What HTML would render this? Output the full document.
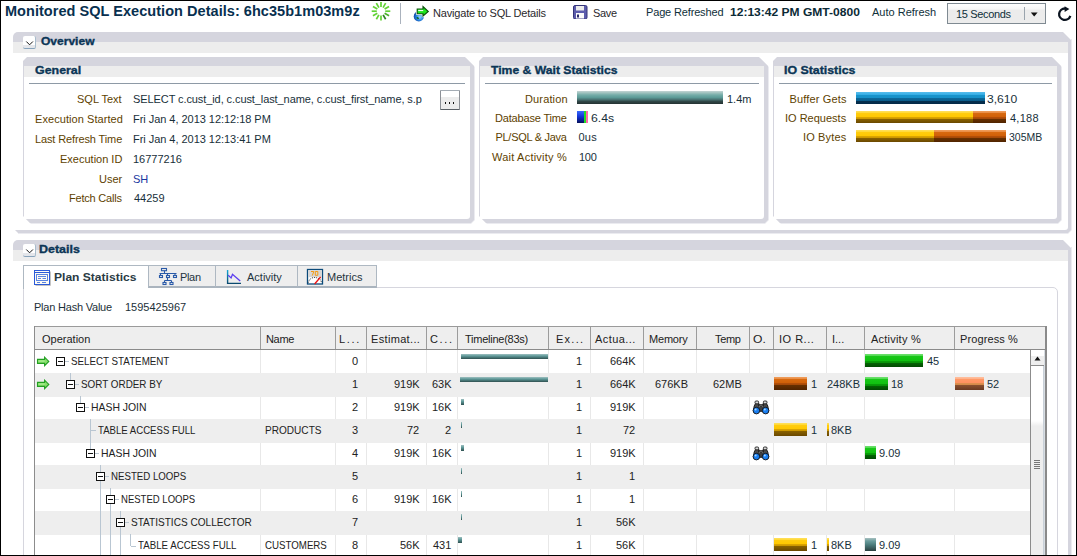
<!DOCTYPE html><html><head><meta charset="utf-8"><style>
html,body{margin:0;padding:0;}
body{width:1077px;height:556px;position:relative;overflow:hidden;background:#fff;font-family:"Liberation Sans", sans-serif;}
.t{position:absolute;white-space:pre;}
.r{position:absolute;}
svg{position:absolute;}
</style></head><body><svg style="left:0;top:0" width="400" height="30"><line x1="381.00" y1="7.00" x2="381.00" y2="1.90" stroke="#62d234" stroke-width="1.7"/><line x1="383.10" y1="7.56" x2="385.65" y2="3.15" stroke="#62d234" stroke-width="1.7"/><line x1="384.64" y1="9.10" x2="389.05" y2="6.55" stroke="#62d234" stroke-width="1.7"/><line x1="385.20" y1="11.20" x2="390.30" y2="11.20" stroke="#62d234" stroke-width="1.7"/><line x1="384.64" y1="13.30" x2="389.05" y2="15.85" stroke="#49b028" stroke-width="1.7"/><line x1="383.10" y1="14.84" x2="385.65" y2="19.25" stroke="#2e8420" stroke-width="1.7"/><line x1="381.00" y1="15.40" x2="381.00" y2="20.50" stroke="#62d234" stroke-width="1.7"/><line x1="378.90" y1="14.84" x2="376.35" y2="19.25" stroke="#62d234" stroke-width="1.7"/><line x1="377.36" y1="13.30" x2="372.95" y2="15.85" stroke="#62d234" stroke-width="1.7"/><line x1="376.80" y1="11.20" x2="371.70" y2="11.20" stroke="#62d234" stroke-width="1.7"/><line x1="377.36" y1="9.10" x2="372.95" y2="6.55" stroke="#62d234" stroke-width="1.7"/><line x1="378.90" y1="7.56" x2="376.35" y2="3.15" stroke="#62d234" stroke-width="1.7"/></svg>
<div class="r" style="left:400px;top:3px;width:1px;height:21px;background:#aab2bd;"></div>
<svg style="left:410px;top:4px" width="22" height="20" viewBox="0 0 22 20">
<defs><radialGradient id="gl" cx="0.6" cy="0.55" r="0.65"><stop offset="0" stop-color="#9ad8ff"/><stop offset="0.5" stop-color="#2a86e0"/><stop offset="1" stop-color="#0a3a9a"/></radialGradient></defs>
<circle cx="8.8" cy="12.4" r="5.1" fill="url(#gl)"/>
<path d="M6.5 13.2 Q8 12.5 9 14.5 Q8 15.5 6.8 14.6Z" fill="#0a6a20"/>
<path d="M7.2 5 H13 V2.6 L18.3 7.5 L13 12 V9.8 H7.2 Z" fill="#fff" stroke="#fff" stroke-width="2.6" stroke-linejoin="round"/>
<path d="M7.2 5 H13 V2.6 L18.3 7.5 L13 12 V9.8 H7.2 Z" fill="#1ee61e" stroke="#0b500b" stroke-width="1.1"/>
<rect x="8.2" y="5.9" width="5" height="1.2" fill="#f0fff0"/>
</svg>
<svg style="left:573px;top:5px" width="15" height="14" viewBox="0 0 15 14">
<rect x="0.5" y="0.5" width="13.5" height="13.5" rx="1.5" fill="#5c5cac" stroke="#343478" stroke-width="1"/>
<rect x="3" y="1" width="8" height="4.5" fill="#ececec"/><rect x="3" y="8" width="8" height="5.5" fill="#fafafa"/><rect x="4" y="9.5" width="2" height="3" fill="#2a2a6a"/>
</svg>
<div class="r" style="left:947px;top:3px;width:97px;height:19px;border:1px solid #7f8a92;background:linear-gradient(#fdfdfd 0,#f6f6f6 5px,#ececec 6px,#ececec 100%);"></div>
<div class="r" style="left:1024px;top:7px;width:1px;height:13px;background:#9aa4ad;"></div>
<svg style="left:1030px;top:12px" width="9" height="6"><path d="M0.8 0.5 L7.6 0.5 L4.2 4.6Z" fill="#111"/></svg>
<svg style="left:1057px;top:6px" width="16" height="16" viewBox="0 0 16 16">
<path d="M13.3 9.8 A5.7 5.7 0 1 1 8.2 2.5" stroke="#0b1420" stroke-width="2.3" fill="none"/>
<path d="M7.6 0.2 L12.4 3 L7.6 5.9 Z" fill="#0b1420"/>
</svg>
<div class="r" style="left:13px;top:32px;width:1058px;height:21px;background:#d5d5de;border-top-left-radius:5px;clip-path:polygon(0 0,1050px 0,1058px 8px,1058px 100%,0 100%);"></div>
<div class="r" style="left:13px;top:42px;width:1055px;height:11px;background:#ededed;"></div>
<div class="r" style="left:1071px;top:39px;width:1px;height:14px;background:#ebebf0;"></div>
<div class="r" style="left:23px;top:36px;width:12px;height:12px;background:linear-gradient(#ffffff 0,#ffffff 9px,#e4e6ea 9px);border-radius:2px;border-right:1px solid #a8bccc;border-bottom:1px solid #88a4bc;"></div>
<svg style="left:25px;top:40px" width="10" height="7"><path d="M1.3 1.5 L4.6 4.8 L7.9 1.5" stroke="#111" stroke-width="1" fill="none"/></svg>
<div class="r" style="left:18px;top:53px;width:1054px;height:181px;background:#ebebf0;clip-path:polygon(0 0,100% 0,100% calc(100% - 4px),calc(100% - 4px) 100%,0 100%);"></div>
<div class="r" style="left:15px;top:53px;width:1056px;height:180px;background:#d5d5de;clip-path:polygon(0 0,100% 0,100% calc(100% - 3px),calc(100% - 3px) 100%,3px 100%,0 calc(100% - 3px));"></div>
<div class="r" style="left:13px;top:53px;width:1055px;height:177px;background:#fff;border-bottom-right-radius:3px;"></div>
<div class="r" style="left:24px;top:58px;width:451px;height:166px;background:#ebebf0;clip-path:polygon(4px 0,442px 0,451px 9px,451px 162px,447px 166px,7px 166px,0 159px,0 4px);"></div>
<div class="r" style="left:23px;top:57px;width:451px;height:166px;background:#d5d5de;clip-path:polygon(4px 0,442px 0,451px 9px,451px 163px,448px 166px,7px 166px,0 159px,0 4px);"></div>
<div class="r" style="left:24px;top:66px;width:446px;height:11px;background:#ededed;"></div>
<div class="r" style="left:24px;top:77px;width:446px;height:142px;background:#fff;border-bottom-right-radius:3px;"></div>
<div class="r" style="left:29px;top:83px;width:436px;height:1px;background:#8e9aa6;"></div>
<div class="r" style="left:480px;top:58px;width:289px;height:166px;background:#ebebf0;clip-path:polygon(4px 0,280px 0,289px 9px,289px 162px,285px 166px,7px 166px,0 159px,0 4px);"></div>
<div class="r" style="left:479px;top:57px;width:289px;height:166px;background:#d5d5de;clip-path:polygon(4px 0,280px 0,289px 9px,289px 163px,286px 166px,7px 166px,0 159px,0 4px);"></div>
<div class="r" style="left:480px;top:66px;width:284px;height:11px;background:#ededed;"></div>
<div class="r" style="left:480px;top:77px;width:284px;height:142px;background:#fff;border-bottom-right-radius:3px;"></div>
<div class="r" style="left:485px;top:83px;width:274px;height:1px;background:#8e9aa6;"></div>
<div class="r" style="left:774px;top:58px;width:288px;height:166px;background:#ebebf0;clip-path:polygon(4px 0,279px 0,288px 9px,288px 162px,284px 166px,7px 166px,0 159px,0 4px);"></div>
<div class="r" style="left:773px;top:57px;width:288px;height:166px;background:#d5d5de;clip-path:polygon(4px 0,279px 0,288px 9px,288px 163px,285px 166px,7px 166px,0 159px,0 4px);"></div>
<div class="r" style="left:774px;top:66px;width:283px;height:11px;background:#ededed;"></div>
<div class="r" style="left:774px;top:77px;width:283px;height:142px;background:#fff;border-bottom-right-radius:3px;"></div>
<div class="r" style="left:779px;top:83px;width:273px;height:1px;background:#8e9aa6;"></div>
<div class="r" style="left:440px;top:90px;width:18px;height:18px;border:1px solid #8c9096;border-top-color:#a4acb4;border-bottom-color:#5a6066;border-radius:1px;background:linear-gradient(#ffffff 0,#ffffff 6px,#ececec 6px,#ececec 100%);"></div>
<div class="r" style="left:445px;top:102px;width:1.4px;height:2px;background:#111;"></div>
<div class="r" style="left:449px;top:102px;width:1.4px;height:2px;background:#111;"></div>
<div class="r" style="left:453px;top:102px;width:1.4px;height:2px;background:#111;"></div>
<div class="r" style="left:577px;top:91px;width:146px;height:13px;background:linear-gradient(#c4d4d4 0,#9cc0bc 2px,#74aca8 4px,#5c9a96 6.5px,#4a7474 8.5px,#304646 10.5px,#243232 13px);"></div>
<div class="r" style="left:577px;top:111px;width:11px;height:12px;background:linear-gradient(90deg,transparent 0,transparent 7px,#22dd22 7px,#22dd22 9px,#ff66aa 9px,#ff66aa 11px),linear-gradient(#3a6aff,#1030d0 6px,#06105a);"></div>
<div class="r" style="left:856px;top:92px;width:129px;height:12px;background:linear-gradient(#58bcec 0,#30ace4 3px,#1894cc 3px,#1690c8 6px,#0c6a9c 6px,#0a5a88 9px,#05304f 9px,#042a48 12px);"></div>
<div class="r" style="left:856px;top:111px;width:117px;height:12px;background:linear-gradient(#ffe060 0,#ffd830 2px,#ffcc10 2px,#ffc800 6px,#e0a800 6px,#c89400 8px,#8a6200 8px,#6a4800 100%);"></div>
<div class="r" style="left:973px;top:111px;width:33px;height:12px;background:linear-gradient(#f0a060 0,#e88a40 2px,#d86a10 2px,#d06008 6px,#b85008 6px,#a04808 8px,#683000 8px,#502400 100%);"></div>
<div class="r" style="left:856px;top:130px;width:78px;height:12px;background:linear-gradient(#ffe060 0,#ffd830 2px,#ffcc10 2px,#ffc800 6px,#e0a800 6px,#c89400 8px,#8a6200 8px,#6a4800 100%);"></div>
<div class="r" style="left:934px;top:130px;width:72px;height:12px;background:linear-gradient(#f0a060 0,#e88a40 2px,#d86a10 2px,#d06008 6px,#b85008 6px,#a04808 8px,#683000 8px,#502400 100%);"></div>
<div class="r" style="left:13px;top:240px;width:1058px;height:21px;background:#d5d5de;border-top-left-radius:5px;clip-path:polygon(0 0,1050px 0,1058px 8px,1058px 100%,0 100%);"></div>
<div class="r" style="left:13px;top:250px;width:1055px;height:11px;background:#ededed;"></div>
<div class="r" style="left:1071px;top:247px;width:1px;height:14px;background:#ebebf0;"></div>
<div class="r" style="left:23px;top:244px;width:12px;height:12px;background:linear-gradient(#ffffff 0,#ffffff 9px,#e4e6ea 9px);border-radius:2px;border-right:1px solid #a8bccc;border-bottom:1px solid #88a4bc;"></div>
<svg style="left:25px;top:248px" width="10" height="7"><path d="M1.3 1.5 L4.6 4.8 L7.9 1.5" stroke="#111" stroke-width="1" fill="none"/></svg>
<div class="r" style="left:1068px;top:261px;width:3px;height:295px;background:#d5d5de;"></div>
<div class="r" style="left:1071px;top:261px;width:1px;height:295px;background:#ebebf0;"></div>
<div class="r" style="left:23px;top:287px;width:1033px;height:300px;border:1px solid #d6d6de;border-top-right-radius:5px;background:#fff;"></div>
<div class="r" style="left:23px;top:265px;width:125px;height:23px;border-top:1px solid #aeb8c2;border-left:1px solid #aeb8c2;background:#fff;"></div>
<div class="r" style="left:148px;top:265px;width:66px;height:20px;border:1px solid #aeb8c2;border-bottom:2px solid #aab4be;background:#eeeeee;"></div>
<div class="r" style="left:215px;top:265px;width:81px;height:20px;border:1px solid #aeb8c2;border-bottom:2px solid #aab4be;background:#eeeeee;"></div>
<div class="r" style="left:297px;top:265px;width:78px;height:20px;border:1px solid #aeb8c2;border-bottom:2px solid #aab4be;background:#eeeeee;"></div>
<svg style="left:34px;top:270px" width="18" height="17" viewBox="0 0 18 17">
<path d="M16.5 1.5 V15.5 H1.5" stroke="#c4c4c4" stroke-width="1" fill="none"/>
<rect x="0.5" y="0.5" width="15" height="14" fill="#fdfbf4" stroke="#2a5ad8" stroke-width="1"/>
<path d="M0.5 2.5 H15.5" stroke="#2a5ad8" stroke-width="1"/>
<rect x="2.5" y="4.5" width="11" height="6" fill="none" stroke="#5a84e0" stroke-width="1"/>
<rect x="4" y="6" width="8" height="1" fill="#5a84e0"/><rect x="4" y="8" width="3" height="1" fill="#5a84e0"/><rect x="8.5" y="8" width="3.5" height="1" fill="#5a84e0"/>
<rect x="3" y="12" width="3" height="1" fill="#5a84e0"/><rect x="8" y="12" width="4" height="1" fill="#5a84e0"/>
</svg>
<svg style="left:158px;top:267px" width="20" height="19" viewBox="0 0 20 19">
<g fill="none" stroke="#2a5aa8" stroke-width="1.1">
<rect x="3.5" y="1.5" width="5" height="2.2"/><path d="M6.5 3.7 V6.5 M1.5 6.5 H18.5 M2.5 6.5 V8.5 M9.5 6.5 V8.5 M17 6.5 V8.5"/>
<rect x="1.5" y="8.5" width="3" height="2"/><rect x="8.5" y="8.5" width="3" height="2"/><rect x="15.5" y="8.5" width="3" height="2"/>
<path d="M9.5 10.5 V13.5 M6.5 13.5 H13.5 M6.5 13.5 V15.5 M13.5 13.5 V15.5"/>
<rect x="5" y="15.5" width="3" height="2"/><rect x="12" y="15.5" width="3" height="2"/>
</g></svg>
<svg style="left:224px;top:266px" width="20" height="20" viewBox="0 0 20 20">
<defs><linearGradient id="ax" x1="0" y1="0" x2="0" y2="1"><stop offset="0" stop-color="#12a8d8"/><stop offset="1" stop-color="#0a4a70"/></linearGradient></defs>
<path d="M3.6 4 V17.4 H17" stroke="url(#ax)" stroke-width="1.4" fill="none"/>
<path d="M4.2 9.3 L7.1 11.9 L8.5 8.3 L16.2 15" stroke="#5a3cf0" stroke-width="1.3" fill="none"/>
</svg>
<svg style="left:306px;top:268px" width="18" height="18" viewBox="0 0 18 18">
<rect x="1.5" y="1.5" width="15" height="14.5" fill="#fff" stroke="#0b4a7a" stroke-width="1.3"/>
<rect x="2.2" y="2.2" width="13.6" height="7" fill="#d6d6d6"/>
<path d="M5 3.5 H7.8 L6.3 7.6 M9.3 3.5 H11.8 V7.3 H9.3 Z" stroke="#f59a10" stroke-width="1" fill="none"/>
<path d="M2.3 14.6 L3.5 11.6 L6 9.9 L9 9.4 L12 10.1 L14.4 11.8 L15.7 14.6" stroke="#222" stroke-width="0.9" fill="none" stroke-dasharray="1 1.1"/>
<path d="M8.6 16 L14.6 9" stroke="#ee1111" stroke-width="1.3"/>
</svg>
<div class="r" style="left:34px;top:326px;width:1013px;height:24px;background:#eeeeee;box-sizing:border-box;border-top:1px solid #9a9a9a;border-bottom:1px solid #8a8a8a;"></div>
<div class="r" style="left:260px;top:350px;width:1px;height:206px;background:#e8e8e8;"></div>
<div class="r" style="left:335px;top:350px;width:1px;height:206px;background:#e8e8e8;"></div>
<div class="r" style="left:366px;top:350px;width:1px;height:206px;background:#e8e8e8;"></div>
<div class="r" style="left:426px;top:350px;width:1px;height:206px;background:#e8e8e8;"></div>
<div class="r" style="left:457px;top:350px;width:1px;height:206px;background:#e8e8e8;"></div>
<div class="r" style="left:548px;top:350px;width:1px;height:206px;background:#e8e8e8;"></div>
<div class="r" style="left:590px;top:350px;width:1px;height:206px;background:#e8e8e8;"></div>
<div class="r" style="left:643px;top:350px;width:1px;height:206px;background:#e8e8e8;"></div>
<div class="r" style="left:696px;top:350px;width:1px;height:206px;background:#e8e8e8;"></div>
<div class="r" style="left:749px;top:350px;width:1px;height:206px;background:#e8e8e8;"></div>
<div class="r" style="left:773px;top:350px;width:1px;height:206px;background:#e8e8e8;"></div>
<div class="r" style="left:826px;top:350px;width:1px;height:206px;background:#e8e8e8;"></div>
<div class="r" style="left:864px;top:350px;width:1px;height:206px;background:#e8e8e8;"></div>
<div class="r" style="left:954px;top:350px;width:1px;height:206px;background:#e8e8e8;"></div>
<div class="r" style="left:35px;top:373px;width:995px;height:24px;background:#eeeeee;"></div>
<div class="r" style="left:35px;top:419px;width:995px;height:24px;background:#eeeeee;"></div>
<div class="r" style="left:35px;top:465px;width:995px;height:24px;background:#eeeeee;"></div>
<div class="r" style="left:35px;top:511px;width:995px;height:24px;background:#eeeeee;"></div>
<div class="r" style="left:260px;top:327px;width:1px;height:22px;background:#9c9c9c;"></div>
<div class="r" style="left:335px;top:327px;width:1px;height:22px;background:#9c9c9c;"></div>
<div class="r" style="left:366px;top:327px;width:1px;height:22px;background:#9c9c9c;"></div>
<div class="r" style="left:426px;top:327px;width:1px;height:22px;background:#9c9c9c;"></div>
<div class="r" style="left:457px;top:327px;width:1px;height:22px;background:#9c9c9c;"></div>
<div class="r" style="left:548px;top:327px;width:1px;height:22px;background:#9c9c9c;"></div>
<div class="r" style="left:590px;top:327px;width:1px;height:22px;background:#9c9c9c;"></div>
<div class="r" style="left:643px;top:327px;width:1px;height:22px;background:#9c9c9c;"></div>
<div class="r" style="left:696px;top:327px;width:1px;height:22px;background:#9c9c9c;"></div>
<div class="r" style="left:749px;top:327px;width:1px;height:22px;background:#9c9c9c;"></div>
<div class="r" style="left:773px;top:327px;width:1px;height:22px;background:#9c9c9c;"></div>
<div class="r" style="left:826px;top:327px;width:1px;height:22px;background:#9c9c9c;"></div>
<div class="r" style="left:864px;top:327px;width:1px;height:22px;background:#9c9c9c;"></div>
<div class="r" style="left:954px;top:327px;width:1px;height:22px;background:#9c9c9c;"></div>
<div class="r" style="left:34px;top:326px;width:1px;height:230px;background:#8c8c8c;"></div>
<div class="r" style="left:56px;top:357px;width:7px;height:7px;border:1px solid #111;background:#fff;"></div>
<div class="r" style="left:58px;top:361px;width:5px;height:1px;background:#111;"></div>
<div class="r" style="left:65px;top:361px;width:4px;height:1px;background:#b9c6d2;"></div>
<div class="r" style="left:66px;top:380px;width:7px;height:7px;border:1px solid #111;background:#fff;"></div>
<div class="r" style="left:68px;top:384px;width:5px;height:1px;background:#111;"></div>
<div class="r" style="left:75px;top:384px;width:4px;height:1px;background:#b9c6d2;"></div>
<div class="r" style="left:70px;top:373px;width:1px;height:7px;background:#b9c6d2;"></div>
<div class="r" style="left:76px;top:403px;width:7px;height:7px;border:1px solid #111;background:#fff;"></div>
<div class="r" style="left:78px;top:407px;width:5px;height:1px;background:#111;"></div>
<div class="r" style="left:85px;top:407px;width:4px;height:1px;background:#b9c6d2;"></div>
<div class="r" style="left:80px;top:396px;width:1px;height:7px;background:#b9c6d2;"></div>
<div class="r" style="left:90px;top:419px;width:1px;height:30px;background:#b9c6d2;"></div>
<div class="r" style="left:91px;top:430px;width:5px;height:1px;background:#b9c6d2;"></div>
<div class="r" style="left:86px;top:449px;width:7px;height:7px;border:1px solid #111;background:#fff;"></div>
<div class="r" style="left:88px;top:453px;width:5px;height:1px;background:#111;"></div>
<div class="r" style="left:95px;top:453px;width:4px;height:1px;background:#b9c6d2;"></div>
<div class="r" style="left:90px;top:442px;width:1px;height:7px;background:#b9c6d2;"></div>
<div class="r" style="left:96px;top:472px;width:7px;height:7px;border:1px solid #111;background:#fff;"></div>
<div class="r" style="left:98px;top:476px;width:5px;height:1px;background:#111;"></div>
<div class="r" style="left:105px;top:476px;width:4px;height:1px;background:#b9c6d2;"></div>
<div class="r" style="left:100px;top:465px;width:1px;height:7px;background:#b9c6d2;"></div>
<div class="r" style="left:100px;top:481px;width:1px;height:75px;background:#b9c6d2;"></div>
<div class="r" style="left:106px;top:495px;width:7px;height:7px;border:1px solid #111;background:#fff;"></div>
<div class="r" style="left:108px;top:499px;width:5px;height:1px;background:#111;"></div>
<div class="r" style="left:115px;top:499px;width:4px;height:1px;background:#b9c6d2;"></div>
<div class="r" style="left:110px;top:488px;width:1px;height:7px;background:#b9c6d2;"></div>
<div class="r" style="left:110px;top:504px;width:1px;height:52px;background:#b9c6d2;"></div>
<div class="r" style="left:116px;top:518px;width:7px;height:7px;border:1px solid #111;background:#fff;"></div>
<div class="r" style="left:118px;top:522px;width:5px;height:1px;background:#111;"></div>
<div class="r" style="left:125px;top:522px;width:4px;height:1px;background:#b9c6d2;"></div>
<div class="r" style="left:120px;top:511px;width:1px;height:7px;background:#b9c6d2;"></div>
<div class="r" style="left:120px;top:527px;width:1px;height:29px;background:#b9c6d2;"></div>
<div class="r" style="left:130px;top:534px;width:1px;height:12px;background:#b9c6d2;"></div>
<div class="r" style="left:131px;top:546px;width:5px;height:1px;background:#b9c6d2;"></div>
<svg style="left:36px;top:356px" width="14" height="11" viewBox="0 0 14 11"><path d="M1.5 3.4 H8.6 V1.2 L12.8 5.4 L8.6 9.6 V7.4 H1.5 Z" fill="#88de6c" stroke="#22a022" stroke-width="1.1"/><rect x="2.6" y="4.4" width="6" height="1.3" fill="#a8f090"/></svg>
<svg style="left:36px;top:379px" width="14" height="11" viewBox="0 0 14 11"><path d="M1.5 3.4 H8.6 V1.2 L12.8 5.4 L8.6 9.6 V7.4 H1.5 Z" fill="#88de6c" stroke="#22a022" stroke-width="1.1"/><rect x="2.6" y="4.4" width="6" height="1.3" fill="#a8f090"/></svg>
<div class="r" style="left:461px;top:354px;width:87px;height:5px;background:linear-gradient(#a0c0c0 0,#5f9a9a 40%,#2f5050 100%);"></div>
<div class="r" style="left:460px;top:377px;width:88px;height:5px;background:linear-gradient(#a0c0c0 0,#5f9a9a 40%,#2f5050 100%);"></div>
<div class="r" style="left:461px;top:399px;width:3px;height:6px;background:linear-gradient(#a0c0c0 0,#5f9a9a 40%,#2f5050 100%);"></div>
<div class="r" style="left:461px;top:422px;width:1px;height:6px;background:linear-gradient(#a0c0c0 0,#5f9a9a 40%,#2f5050 100%);"></div>
<div class="r" style="left:461px;top:445px;width:3px;height:6px;background:linear-gradient(#a0c0c0 0,#5f9a9a 40%,#2f5050 100%);"></div>
<div class="r" style="left:461px;top:468px;width:1px;height:6px;background:linear-gradient(#a0c0c0 0,#5f9a9a 40%,#2f5050 100%);"></div>
<div class="r" style="left:461px;top:491px;width:1px;height:6px;background:linear-gradient(#a0c0c0 0,#5f9a9a 40%,#2f5050 100%);"></div>
<div class="r" style="left:461px;top:514px;width:1px;height:6px;background:linear-gradient(#a0c0c0 0,#5f9a9a 40%,#2f5050 100%);"></div>
<div class="r" style="left:458px;top:537px;width:4px;height:6px;background:linear-gradient(#a0c0c0 0,#5f9a9a 40%,#2f5050 100%);"></div>
<div class="r" style="left:865px;top:354px;width:58px;height:13px;background:linear-gradient(#70e070 0,#50d850 2px,#18c818 2px,#10c010 7px,#08a008 7px,#089008 9px,#046404 9px,#024a02 100%);"></div>
<div class="r" style="left:774px;top:377px;width:33px;height:13px;background:linear-gradient(#f0a060 0,#e88a40 2px,#d86a10 2px,#d06008 6px,#b85008 6px,#a04808 8px,#683000 8px,#502400 100%);"></div>
<div class="r" style="left:865px;top:377px;width:23px;height:13px;background:linear-gradient(#70e070 0,#50d850 2px,#18c818 2px,#10c010 7px,#08a008 7px,#089008 9px,#046404 9px,#024a02 100%);"></div>
<div class="r" style="left:955px;top:377px;width:29px;height:13px;background:linear-gradient(#ffc0a0 0,#ffb088 2px,#ff9a68 2px,#ff9060 6px,#e09050 6px,#d08848 8px,#8a5030 8px,#6a3a22 100%);"></div>
<div class="r" style="left:774px;top:423px;width:33px;height:13px;background:linear-gradient(#ffe060 0,#ffd830 2px,#ffcc10 2px,#ffc800 6px,#e0a800 6px,#c89400 8px,#8a6200 8px,#6a4800 100%);"></div>
<div class="r" style="left:827px;top:423px;width:2px;height:13px;background:linear-gradient(#ffe060 0,#ffd830 2px,#ffcc10 2px,#ffc800 6px,#e0a800 6px,#c89400 8px,#8a6200 8px,#6a4800 100%);"></div>
<div class="r" style="left:865px;top:446px;width:11px;height:13px;background:linear-gradient(#70e070 0,#50d850 2px,#18c818 2px,#10c010 7px,#08a008 7px,#089008 9px,#046404 9px,#024a02 100%);"></div>
<div class="r" style="left:774px;top:538px;width:33px;height:13px;background:linear-gradient(#ffe060 0,#ffd830 2px,#ffcc10 2px,#ffc800 6px,#e0a800 6px,#c89400 8px,#8a6200 8px,#6a4800 100%);"></div>
<div class="r" style="left:827px;top:538px;width:2px;height:13px;background:linear-gradient(#ffe060 0,#ffd830 2px,#ffcc10 2px,#ffc800 6px,#e0a800 6px,#c89400 8px,#8a6200 8px,#6a4800 100%);"></div>
<div class="r" style="left:865px;top:538px;width:11px;height:13px;background:linear-gradient(#a8c0c0 0,#6a9c9c 3px,#4a7a7a 7px,#2a4040 13px);"></div>
<svg style="left:752px;top:400px" width="18" height="16" viewBox="0 0 18 16">
<path d="M1.3 11 L2.2 6 L3.5 3.5 L7 3.5 L7.6 11 Z M16.7 11 L15.8 6 L14.5 3.5 L11 3.5 L10.4 11 Z" fill="#4a4a4a" stroke="#111" stroke-width="0.9"/>
<rect x="3" y="1" width="3.6" height="2.8" rx="1" fill="#d8d8d8" stroke="#222" stroke-width="0.9"/>
<rect x="11.4" y="1" width="3.6" height="2.8" rx="1" fill="#d8d8d8" stroke="#222" stroke-width="0.9"/>
<rect x="6" y="4.2" width="6" height="1.8" fill="#222"/><rect x="7.4" y="5.5" width="3.2" height="1" fill="#999"/>
<rect x="8.2" y="6" width="1.6" height="6" fill="#111"/>
<circle cx="4.4" cy="10.6" r="3.3" fill="#1a7ef0" stroke="#111" stroke-width="0.9"/>
<circle cx="13.6" cy="10.6" r="3.3" fill="#1a7ef0" stroke="#111" stroke-width="0.9"/>
<circle cx="3.6" cy="9.6" r="1" fill="#a8d8ff"/><circle cx="12.8" cy="9.6" r="1" fill="#a8d8ff"/>
</svg>
<svg style="left:752px;top:446px" width="18" height="16" viewBox="0 0 18 16">
<path d="M1.3 11 L2.2 6 L3.5 3.5 L7 3.5 L7.6 11 Z M16.7 11 L15.8 6 L14.5 3.5 L11 3.5 L10.4 11 Z" fill="#4a4a4a" stroke="#111" stroke-width="0.9"/>
<rect x="3" y="1" width="3.6" height="2.8" rx="1" fill="#d8d8d8" stroke="#222" stroke-width="0.9"/>
<rect x="11.4" y="1" width="3.6" height="2.8" rx="1" fill="#d8d8d8" stroke="#222" stroke-width="0.9"/>
<rect x="6" y="4.2" width="6" height="1.8" fill="#222"/><rect x="7.4" y="5.5" width="3.2" height="1" fill="#999"/>
<rect x="8.2" y="6" width="1.6" height="6" fill="#111"/>
<circle cx="4.4" cy="10.6" r="3.3" fill="#1a7ef0" stroke="#111" stroke-width="0.9"/>
<circle cx="13.6" cy="10.6" r="3.3" fill="#1a7ef0" stroke="#111" stroke-width="0.9"/>
<circle cx="3.6" cy="9.6" r="1" fill="#a8d8ff"/><circle cx="12.8" cy="9.6" r="1" fill="#a8d8ff"/>
</svg>
<div class="r" style="left:1030px;top:350px;width:1px;height:206px;background:#8c8c8c;"></div>
<div class="r" style="left:1031px;top:350px;width:13px;height:15px;background:linear-gradient(#ffffff 0,#ffffff 6px,#eeeeee 6px);"></div>
<div class="r" style="left:1031px;top:365px;width:13px;height:1px;background:#8c8c8c;"></div>
<svg style="left:1034px;top:356px" width="8" height="5"><path d="M0.5 4.5 L3.5 0.5 L6.5 4.5Z" fill="#111"/></svg>
<div class="r" style="left:1031px;top:366px;width:12px;height:190px;background:linear-gradient(#ffffff 0,#ffffff 55px,#eeeeee 60px);"></div>
<div class="r" style="left:1043px;top:366px;width:1px;height:190px;background:#c8d0d8;"></div>
<div class="r" style="left:1034px;top:460px;width:6px;height:1px;background:#777;"></div>
<div class="r" style="left:1034px;top:462px;width:6px;height:1px;background:#777;"></div>
<div class="r" style="left:1034px;top:464px;width:6px;height:1px;background:#777;"></div>
<div class="r" style="left:1034px;top:466px;width:6px;height:1px;background:#777;"></div>
<div class="r" style="left:1034px;top:468px;width:6px;height:1px;background:#777;"></div>
<div class="r" style="left:1045px;top:326px;width:2px;height:230px;background:#8a8a8a;"></div>
<div class="r" style="left:1044px;top:350px;width:1px;height:206px;background:#d8dde2;"></div>
<div class="t" style="left:5.00px;top:3px;font-size:14.5px;line-height:17px;font-weight:bold;color:#08304f;letter-spacing:0.044px;">Monitored SQL Execution Details: 6hc35b1m03m9z</div>
<div class="t" style="left:433.00px;top:7px;font-size:11px;line-height:13px;font-weight:normal;color:#2a282c;letter-spacing:-0.182px;">Navigate to SQL Details</div>
<div class="t" style="left:593.00px;top:7px;font-size:11px;line-height:13px;font-weight:normal;color:#2a282c;letter-spacing:-0.333px;">Save</div>
<div class="t" style="left:646.00px;top:6px;font-size:11px;line-height:13px;font-weight:normal;color:#0f2f3a;letter-spacing:-0.154px;">Page Refreshed</div>
<div class="t" style="left:729.91px;top:6px;font-size:11px;line-height:13px;font-weight:bold;color:#0b2a36;transform:scaleX(1.0948);transform-origin:0 0;">12:13:42 PM GMT-0800</div>
<div class="t" style="left:872.00px;top:6px;font-size:11px;line-height:13px;font-weight:normal;color:#0f2f3a;">Auto Refresh</div>
<div class="t" style="left:956.00px;top:8px;font-size:11px;line-height:13px;font-weight:normal;color:#0f2f3a;letter-spacing:-0.333px;">15 Seconds</div>
<div class="t" style="left:40.50px;top:35px;font-size:11px;line-height:13px;font-weight:bold;color:#0b3556;transform:scaleX(1.0938);transform-origin:0 0;-webkit-text-stroke:0.35px #0b3556;">Overview</div>
<div class="t" style="left:35.00px;top:64px;font-size:11px;line-height:13px;font-weight:bold;color:#0b3556;transform:scaleX(1.1282);transform-origin:0 0;-webkit-text-stroke:0.35px #0b3556;">General</div>
<div class="t" style="left:491.00px;top:64px;font-size:11px;line-height:13px;font-weight:bold;color:#0b3556;transform:scaleX(1.1062);transform-origin:0 0;-webkit-text-stroke:0.35px #0b3556;">Time &amp; Wait Statistics</div>
<div class="t" style="left:783.88px;top:64px;font-size:11px;line-height:13px;font-weight:bold;color:#0b3556;transform:scaleX(1.1230);transform-origin:0 0;-webkit-text-stroke:0.35px #0b3556;">IO Statistics</div>
<div class="t" style="left:77.00px;top:93px;font-size:11px;line-height:13px;font-weight:normal;color:#5e4200;">SQL Text</div>
<div class="t" style="left:133.00px;top:93px;font-size:11px;line-height:13px;font-weight:normal;color:#18303a;letter-spacing:-0.088px;">SELECT c.cust_id, c.cust_last_name, c.cust_first_name, s.p</div>
<div class="t" style="left:35.00px;top:113px;font-size:11px;line-height:13px;font-weight:normal;color:#5e4200;letter-spacing:0.062px;">Execution Started</div>
<div class="t" style="left:133.00px;top:113px;font-size:11px;line-height:13px;font-weight:normal;color:#18303a;letter-spacing:-0.038px;">Fri Jan 4, 2013 12:12:18 PM</div>
<div class="t" style="left:35.00px;top:133px;font-size:11px;line-height:13px;font-weight:normal;color:#5e4200;letter-spacing:-0.125px;">Last Refresh Time</div>
<div class="t" style="left:133.00px;top:133px;font-size:11px;line-height:13px;font-weight:normal;color:#18303a;letter-spacing:-0.038px;">Fri Jan 4, 2013 12:13:41 PM</div>
<div class="t" style="left:60.00px;top:153px;font-size:11px;line-height:13px;font-weight:normal;color:#5e4200;">Execution ID</div>
<div class="t" style="left:133.00px;top:153px;font-size:11px;line-height:13px;font-weight:normal;color:#18303a;">16777216</div>
<div class="t" style="left:99.00px;top:173px;font-size:11px;line-height:13px;font-weight:normal;color:#5e4200;">User</div>
<div class="t" style="left:133.00px;top:173px;font-size:11px;line-height:13px;font-weight:normal;color:#1838a0;">SH</div>
<div class="t" style="left:69.00px;top:192px;font-size:11px;line-height:13px;font-weight:normal;color:#5e4200;letter-spacing:-0.200px;">Fetch Calls</div>
<div class="t" style="left:134.00px;top:192px;font-size:11px;line-height:13px;font-weight:normal;color:#18303a;">44259</div>
<div class="t" style="left:525.00px;top:93px;font-size:11px;line-height:13px;font-weight:normal;color:#5e4200;letter-spacing:0.143px;">Duration</div>
<div class="t" style="left:495.00px;top:112px;font-size:11px;line-height:13px;font-weight:normal;color:#5e4200;letter-spacing:-0.167px;">Database Time</div>
<div class="t" style="left:495.50px;top:131px;font-size:11px;line-height:13px;font-weight:normal;color:#5e4200;letter-spacing:-0.292px;">PL/SQL &amp; Java</div>
<div class="t" style="left:492.00px;top:151px;font-size:11px;line-height:13px;font-weight:normal;color:#5e4200;letter-spacing:0.214px;">Wait Activity %</div>
<div class="t" style="left:727.00px;top:93px;font-size:11px;line-height:13px;font-weight:normal;color:#18303a;">1.4m</div>
<div class="t" style="left:590.89px;top:112px;font-size:11px;line-height:13px;font-weight:normal;color:#18303a;transform:scaleX(1.1111);transform-origin:0 0;">6.4s</div>
<div class="t" style="left:578.50px;top:131px;font-size:11px;line-height:13px;font-weight:normal;color:#18303a;letter-spacing:0.250px;">0us</div>
<div class="t" style="left:579.00px;top:151px;font-size:11px;line-height:13px;font-weight:normal;color:#18303a;letter-spacing:-0.250px;">100</div>
<div class="t" style="left:789.50px;top:93px;font-size:11px;line-height:13px;font-weight:normal;color:#5e4200;letter-spacing:0.150px;">Buffer Gets</div>
<div class="t" style="left:785.00px;top:112px;font-size:11px;line-height:13px;font-weight:normal;color:#5e4200;">IO Requests</div>
<div class="t" style="left:803.00px;top:131px;font-size:11px;line-height:13px;font-weight:normal;color:#5e4200;letter-spacing:0.143px;">IO Bytes</div>
<div class="t" style="left:987.40px;top:93px;font-size:11px;line-height:13px;font-weight:normal;color:#18303a;transform:scaleX(1.1000);transform-origin:0 0;">3,610</div>
<div class="t" style="left:1010.00px;top:112px;font-size:11px;line-height:13px;font-weight:normal;color:#18303a;letter-spacing:0.250px;">4,188</div>
<div class="t" style="left:1009.05px;top:131px;font-size:11px;line-height:13px;font-weight:normal;color:#18303a;transform:scaleX(0.9531);transform-origin:0 0;">305MB</div>
<div class="t" style="left:39.37px;top:243px;font-size:11px;line-height:13px;font-weight:bold;color:#0b3556;transform:scaleX(1.1324);transform-origin:0 0;-webkit-text-stroke:0.35px #0b3556;">Details</div>
<div class="t" style="left:53.90px;top:271px;font-size:11px;line-height:13px;font-weight:bold;color:#2a3a44;transform:scaleX(1.0959);transform-origin:0 0;">Plan Statistics</div>
<div class="t" style="left:180.00px;top:271px;font-size:11px;line-height:13px;font-weight:normal;color:#1f3440;letter-spacing:-0.333px;">Plan</div>
<div class="t" style="left:247.00px;top:271px;font-size:11px;line-height:13px;font-weight:normal;color:#1f3440;">Activity</div>
<div class="t" style="left:327.00px;top:271px;font-size:11px;line-height:13px;font-weight:normal;color:#1f3440;">Metrics</div>
<div class="t" style="left:34.00px;top:301px;font-size:11px;line-height:13px;font-weight:normal;color:#1c3038;letter-spacing:-0.214px;">Plan Hash Value</div>
<div class="t" style="left:125.00px;top:301px;font-size:11px;line-height:13px;font-weight:normal;color:#1c3038;">1595425967</div>
<div class="t" style="left:42.00px;top:333px;font-size:11px;line-height:13px;font-weight:normal;color:#222;">Operation</div>
<div class="t" style="left:266.00px;top:333px;font-size:11px;line-height:13px;font-weight:normal;color:#222;letter-spacing:-0.333px;">Name</div>
<div class="t" style="left:339.00px;top:333px;font-size:11px;line-height:13px;font-weight:normal;color:#222;letter-spacing:1.667px;">L...</div>
<div class="t" style="left:371.00px;top:333px;font-size:11px;line-height:13px;font-weight:normal;color:#222;letter-spacing:0.333px;">Estimat...</div>
<div class="t" style="left:430.00px;top:333px;font-size:11px;line-height:13px;font-weight:normal;color:#222;letter-spacing:1.667px;">C...</div>
<div class="t" style="left:465.00px;top:333px;font-size:11px;line-height:13px;font-weight:normal;color:#222;letter-spacing:-0.250px;">Timeline(83s)</div>
<div class="t" style="left:556.00px;top:333px;font-size:11px;line-height:13px;font-weight:normal;color:#222;letter-spacing:1.250px;">Ex...</div>
<div class="t" style="left:595.00px;top:333px;font-size:11px;line-height:13px;font-weight:normal;color:#222;letter-spacing:0.429px;">Actua...</div>
<div class="t" style="left:649.00px;top:333px;font-size:11px;line-height:13px;font-weight:normal;color:#222;letter-spacing:-0.200px;">Memory</div>
<div class="t" style="left:715.00px;top:333px;font-size:11px;line-height:13px;font-weight:normal;color:#222;letter-spacing:-0.333px;">Temp</div>
<div class="t" style="left:753.00px;top:333px;font-size:11px;line-height:13px;font-weight:normal;color:#222;transform:scaleX(1.1000);transform-origin:0 0;">O.</div>
<div class="t" style="left:779.00px;top:333px;font-size:11px;line-height:13px;font-weight:normal;color:#222;letter-spacing:0.500px;">IO R...</div>
<div class="t" style="left:832.00px;top:333px;font-size:11px;line-height:13px;font-weight:normal;color:#222;">I...</div>
<div class="t" style="left:871.00px;top:333px;font-size:11px;line-height:13px;font-weight:normal;color:#222;letter-spacing:0.222px;">Activity %</div>
<div class="t" style="left:960.00px;top:333px;font-size:11px;line-height:13px;font-weight:normal;color:#222;letter-spacing:0.111px;">Progress %</div>
<div class="t" style="left:71.11px;top:355px;font-size:11px;line-height:13px;font-weight:normal;color:#222;transform:scaleX(0.8889);transform-origin:0 0;">SELECT STATEMENT</div>
<div class="t" style="left:352.00px;top:355px;font-size:11px;line-height:13px;font-weight:normal;color:#222;">0</div>
<div class="t" style="left:576.00px;top:355px;font-size:11px;line-height:13px;font-weight:normal;color:#222;">1</div>
<div class="t" style="left:610.00px;top:355px;font-size:11px;line-height:13px;font-weight:normal;color:#222;">664K</div>
<div class="t" style="left:81.10px;top:378px;font-size:11px;line-height:13px;font-weight:normal;color:#222;transform:scaleX(0.8977);transform-origin:0 0;">SORT ORDER BY</div>
<div class="t" style="left:352.00px;top:378px;font-size:11px;line-height:13px;font-weight:normal;color:#222;">1</div>
<div class="t" style="left:394.00px;top:378px;font-size:11px;line-height:13px;font-weight:normal;color:#222;">919K</div>
<div class="t" style="left:432.00px;top:378px;font-size:11px;line-height:13px;font-weight:normal;color:#222;">63K</div>
<div class="t" style="left:576.00px;top:378px;font-size:11px;line-height:13px;font-weight:normal;color:#222;">1</div>
<div class="t" style="left:610.00px;top:378px;font-size:11px;line-height:13px;font-weight:normal;color:#222;">664K</div>
<div class="t" style="left:655.00px;top:378px;font-size:11px;line-height:13px;font-weight:normal;color:#222;">676KB</div>
<div class="t" style="left:713.00px;top:378px;font-size:11px;line-height:13px;font-weight:normal;color:#222;">62MB</div>
<div class="t" style="left:91.05px;top:401px;font-size:11px;line-height:13px;font-weight:normal;color:#222;transform:scaleX(0.9464);transform-origin:0 0;">HASH JOIN</div>
<div class="t" style="left:352.00px;top:401px;font-size:11px;line-height:13px;font-weight:normal;color:#222;">2</div>
<div class="t" style="left:394.00px;top:401px;font-size:11px;line-height:13px;font-weight:normal;color:#222;">919K</div>
<div class="t" style="left:432.00px;top:401px;font-size:11px;line-height:13px;font-weight:normal;color:#222;">16K</div>
<div class="t" style="left:576.00px;top:401px;font-size:11px;line-height:13px;font-weight:normal;color:#222;">1</div>
<div class="t" style="left:610.00px;top:401px;font-size:11px;line-height:13px;font-weight:normal;color:#222;">919K</div>
<div class="t" style="left:98.00px;top:424px;font-size:11px;line-height:13px;font-weight:normal;color:#222;transform:scaleX(0.8727);transform-origin:0 0;">TABLE ACCESS FULL</div>
<div class="t" style="left:265.08px;top:424px;font-size:11px;line-height:13px;font-weight:normal;color:#222;transform:scaleX(0.9153);transform-origin:0 0;">PRODUCTS</div>
<div class="t" style="left:352.00px;top:424px;font-size:11px;line-height:13px;font-weight:normal;color:#222;">3</div>
<div class="t" style="left:407.00px;top:424px;font-size:11px;line-height:13px;font-weight:normal;color:#222;">72</div>
<div class="t" style="left:445.00px;top:424px;font-size:11px;line-height:13px;font-weight:normal;color:#222;">2</div>
<div class="t" style="left:576.00px;top:424px;font-size:11px;line-height:13px;font-weight:normal;color:#222;">1</div>
<div class="t" style="left:623.00px;top:424px;font-size:11px;line-height:13px;font-weight:normal;color:#222;">72</div>
<div class="t" style="left:101.05px;top:447px;font-size:11px;line-height:13px;font-weight:normal;color:#222;transform:scaleX(0.9464);transform-origin:0 0;">HASH JOIN</div>
<div class="t" style="left:352.00px;top:447px;font-size:11px;line-height:13px;font-weight:normal;color:#222;">4</div>
<div class="t" style="left:394.00px;top:447px;font-size:11px;line-height:13px;font-weight:normal;color:#222;">919K</div>
<div class="t" style="left:432.00px;top:447px;font-size:11px;line-height:13px;font-weight:normal;color:#222;">16K</div>
<div class="t" style="left:576.00px;top:447px;font-size:11px;line-height:13px;font-weight:normal;color:#222;">1</div>
<div class="t" style="left:610.00px;top:447px;font-size:11px;line-height:13px;font-weight:normal;color:#222;">919K</div>
<div class="t" style="left:111.12px;top:470px;font-size:11px;line-height:13px;font-weight:normal;color:#222;transform:scaleX(0.8795);transform-origin:0 0;">NESTED LOOPS</div>
<div class="t" style="left:352.00px;top:470px;font-size:11px;line-height:13px;font-weight:normal;color:#222;">5</div>
<div class="t" style="left:576.00px;top:470px;font-size:11px;line-height:13px;font-weight:normal;color:#222;">1</div>
<div class="t" style="left:629.00px;top:470px;font-size:11px;line-height:13px;font-weight:normal;color:#222;">1</div>
<div class="t" style="left:121.13px;top:493px;font-size:11px;line-height:13px;font-weight:normal;color:#222;transform:scaleX(0.8675);transform-origin:0 0;">NESTED LOOPS</div>
<div class="t" style="left:352.00px;top:493px;font-size:11px;line-height:13px;font-weight:normal;color:#222;">6</div>
<div class="t" style="left:394.00px;top:493px;font-size:11px;line-height:13px;font-weight:normal;color:#222;">919K</div>
<div class="t" style="left:432.00px;top:493px;font-size:11px;line-height:13px;font-weight:normal;color:#222;">16K</div>
<div class="t" style="left:576.00px;top:493px;font-size:11px;line-height:13px;font-weight:normal;color:#222;">1</div>
<div class="t" style="left:629.00px;top:493px;font-size:11px;line-height:13px;font-weight:normal;color:#222;">1</div>
<div class="t" style="left:131.09px;top:516px;font-size:11px;line-height:13px;font-weight:normal;color:#222;transform:scaleX(0.9147);transform-origin:0 0;">STATISTICS COLLECTOR</div>
<div class="t" style="left:352.00px;top:516px;font-size:11px;line-height:13px;font-weight:normal;color:#222;">7</div>
<div class="t" style="left:576.00px;top:516px;font-size:11px;line-height:13px;font-weight:normal;color:#222;">1</div>
<div class="t" style="left:616.00px;top:516px;font-size:11px;line-height:13px;font-weight:normal;color:#222;">56K</div>
<div class="t" style="left:138.00px;top:539px;font-size:11px;line-height:13px;font-weight:normal;color:#222;transform:scaleX(0.8818);transform-origin:0 0;">TABLE ACCESS FULL</div>
<div class="t" style="left:265.12px;top:539px;font-size:11px;line-height:13px;font-weight:normal;color:#222;transform:scaleX(0.8824);transform-origin:0 0;">CUSTOMERS</div>
<div class="t" style="left:352.00px;top:539px;font-size:11px;line-height:13px;font-weight:normal;color:#222;">8</div>
<div class="t" style="left:400.00px;top:539px;font-size:11px;line-height:13px;font-weight:normal;color:#222;">56K</div>
<div class="t" style="left:433.00px;top:539px;font-size:11px;line-height:13px;font-weight:normal;color:#222;">431</div>
<div class="t" style="left:576.00px;top:539px;font-size:11px;line-height:13px;font-weight:normal;color:#222;">1</div>
<div class="t" style="left:616.00px;top:539px;font-size:11px;line-height:13px;font-weight:normal;color:#222;">56K</div>
<div class="t" style="left:927.00px;top:355px;font-size:11px;line-height:13px;font-weight:normal;color:#18303a;">45</div>
<div class="t" style="left:811.00px;top:378px;font-size:11px;line-height:13px;font-weight:normal;color:#18303a;">1</div>
<div class="t" style="left:827.00px;top:378px;font-size:11px;line-height:13px;font-weight:normal;color:#18303a;">248KB</div>
<div class="t" style="left:891.00px;top:378px;font-size:11px;line-height:13px;font-weight:normal;color:#18303a;">18</div>
<div class="t" style="left:987.00px;top:378px;font-size:11px;line-height:13px;font-weight:normal;color:#18303a;">52</div>
<div class="t" style="left:811.00px;top:424px;font-size:11px;line-height:13px;font-weight:normal;color:#18303a;">1</div>
<div class="t" style="left:831.00px;top:424px;font-size:11px;line-height:13px;font-weight:normal;color:#18303a;">8KB</div>
<div class="t" style="left:879.00px;top:447px;font-size:11px;line-height:13px;font-weight:normal;color:#18303a;">9.09</div>
<div class="t" style="left:811.00px;top:539px;font-size:11px;line-height:13px;font-weight:normal;color:#18303a;">1</div>
<div class="t" style="left:831.00px;top:539px;font-size:11px;line-height:13px;font-weight:normal;color:#18303a;">8KB</div>
<div class="t" style="left:879.00px;top:539px;font-size:11px;line-height:13px;font-weight:normal;color:#18303a;">9.09</div>
<div class="r" style="left:0;top:0;width:1075px;height:554px;border:1px solid #000;"></div>
</body></html>
